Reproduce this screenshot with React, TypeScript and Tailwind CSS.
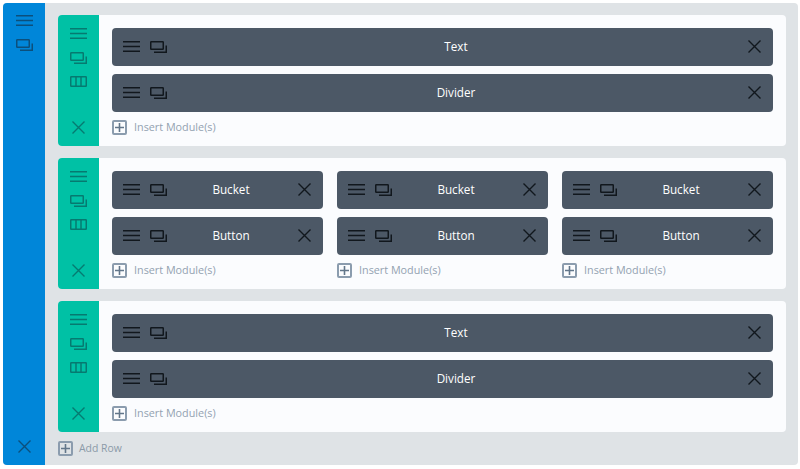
const MenuIcon = ({ className }: { className: string }) => (
  <svg viewBox="0 0 17 11" className={className} fill="none" stroke="currentColor" strokeWidth="1.5">
    <path d="M0 0.750h17M0 5.500h17M0 10.250h17" />
  </svg>
);

const DuplicateIcon = ({ className }: { className: string }) => (
  <svg viewBox="0 0 17 12" className={className} fill="none" stroke="currentColor" strokeWidth="1.5">
    <rect x="0.750" y="0.750" width="12.500" height="7.500" rx="0.600" />
    <path d="M4 11.250h12.250V4.500" />
  </svg>
);

const ColumnsIcon = ({ className }: { className: string }) => (
  <svg viewBox="0 0 17 11" className={className} fill="none" stroke="currentColor" strokeWidth="1.5">
    <rect x="0.750" y="0.750" width="15.500" height="9.500" rx="0.500" />
    <path d="M6 0.750v9.500M11 0.750v9.500" />
  </svg>
);

const CloseIcon = ({ className }: { className: string }) => (
  <svg viewBox="0 0 13 13" className={className} fill="none" stroke="currentColor" strokeWidth="1.400">
    <path d="M0.500 0.500l12 12M12.500 0.500l-12 12" />
  </svg>
);

const PlusBox = () => (
  <span className="flex h-[15px] w-[15px] shrink-0 items-center justify-center rounded-[2px] border-2 border-[#8b9cae]">
    <svg viewBox="0 0 9 9" className="h-[9px] w-[9px]" fill="none" stroke="#62768a" strokeWidth="1.600">
      <path d="M4.500 0v9M0 4.500h9" />
    </svg>
  </span>
);

function Module({ name }: { name: string }) {
  return (
    <div className="flex h-[38px] items-center rounded-[4px] bg-[#4c5866] pr-3 pl-[11px] text-[#11171d]">
      <MenuIcon className="mb-px h-[11px] w-[17px] shrink-0" />
      <DuplicateIcon className="mb-px ml-[10px] h-[12px] w-[17px] shrink-0" />
      <span className="flex-1 pr-[3px] text-center text-[11.700px] text-white">{name}</span>
      <CloseIcon className="mb-px h-[13px] w-[13px] shrink-0" />
    </div>
  );
}

function Column({ modules }: { modules: string[] }) {
  return (
    <div className="flex min-w-0 flex-1 flex-col gap-2">
      {modules.map((name) => (
        <Module key={name} name={name} />
      ))}
      <div className="flex h-[15px] items-center gap-[7px] text-[10.800px] text-[#93a2b1]">
        <PlusBox />
        <span>Insert Module(s)</span>
      </div>
    </div>
  );
}

function Row({ columns }: { columns: string[][] }) {
  return (
    <div className="flex h-[131px] overflow-hidden rounded-[4px] bg-[#fbfcfe]">
      <div className="flex w-[41px] shrink-0 flex-col items-center bg-[#00c1a5] pt-[13px] pb-3 text-[#067a70]">
        <MenuIcon className="h-[11px] w-[17px]" />
        <DuplicateIcon className="mt-[13px] h-[12px] w-[17px]" />
        <ColumnsIcon className="mt-3 h-[11px] w-[17px]" />
        <CloseIcon className="mt-auto h-[13px] w-[13px]" />
      </div>
      <div className="flex flex-1 gap-[14px] px-[13px] pt-[13px]">
        {columns.map((modules, i) => (
          <Column key={i} modules={modules} />
        ))}
      </div>
    </div>
  );
}

const textRow = [["Text", "Divider"]];
const bucketRow = [
  ["Bucket", "Button"],
  ["Bucket", "Button"],
  ["Bucket", "Button"],
];

export default function App() {
  return (
    <div className="h-[469px] w-[800px] bg-white p-[3px] pr-[2px] pb-1 font-['Open_Sans',sans-serif]">
      <div className="flex h-full overflow-hidden rounded-[4px] bg-[#dfe3e6]">
        <div className="flex w-[42px] shrink-0 flex-col items-center bg-[#0086d9] pt-3 pb-3 text-[#0c4f7c]">
          <MenuIcon className="h-[11px] w-[17px]" />
          <DuplicateIcon className="mt-[13px] h-[12px] w-[17px]" />
          <CloseIcon className="mt-auto h-[13px] w-[13px]" />
        </div>
        <div className="flex flex-1 flex-col gap-3 pt-3 pr-3 pl-[13px]">
          <Row columns={textRow} />
          <Row columns={bucketRow} />
          <Row columns={textRow} />
          <div className="-mt-[3px] flex h-[15px] items-center gap-[6px] text-[10.400px] text-[#8b9aa8]">
            <PlusBox />
            <span>Add Row</span>
          </div>
        </div>
      </div>
    </div>
  );
}
